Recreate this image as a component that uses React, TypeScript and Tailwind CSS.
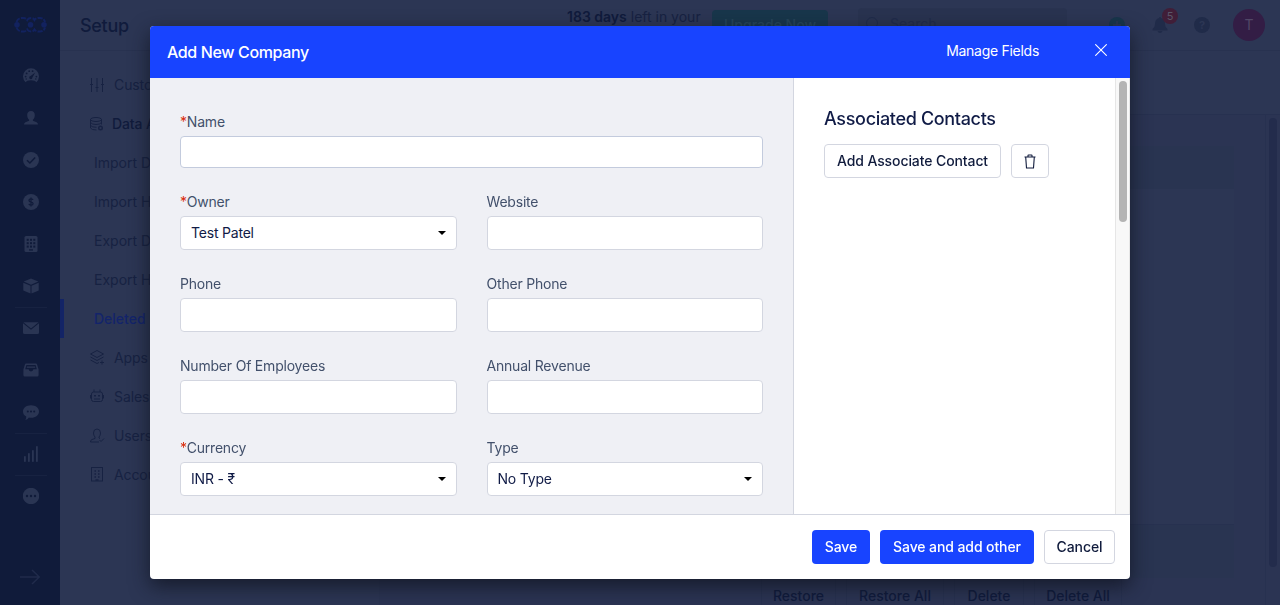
import React from "react";

type Kids = { children: React.ReactNode };

function Solid({ children }: Kids) {
  return (
    <svg viewBox="0 0 16 16" className="h-4 w-4 fill-[#2a3553]">
      {children}
    </svg>
  );
}

function Line({ children }: Kids) {
  return (
    <svg
      viewBox="0 0 14 14"
      className="h-3.5 w-3.5 shrink-0 overflow-visible fill-none stroke-[#172242]"
      strokeWidth="1"
    >
      {children}
    </svg>
  );
}

const dark = "#101b3a";

const navIcons: { divider?: boolean; icon: React.ReactNode }[] = [
  {
    icon: (
      <Solid>
        <path d="M2.6 14.2A8 8 0 1 1 13.4 14.2Q12.4 12.2 8 12.2Q3.6 12.2 2.6 14.2Z" />
        <g fill={dark}>
          <circle cx="2.6" cy="8.6" r=".9" />
          <circle cx="3.6" cy="5.4" r=".9" />
          <circle cx="6.2" cy="3.2" r=".9" />
          <circle cx="9.6" cy="3.2" r=".9" />
          <circle cx="13.4" cy="8.6" r=".9" />
          <circle cx="3.2" cy="11" r=".7" />
          <circle cx="12.8" cy="11" r=".7" />
          <path d="M12.2 4.4L9.4 9.6A1.6 1.6 0 1 1 7.6 8.1Z" />
        </g>
      </Solid>
    ),
  },
  {
    icon: (
      <Solid>
        <path d="M8 1C10.6 1 11.9 2.8 11.8 5.2C11.7 7.4 11 8.8 9.9 9.7V10.8L13.6 12.2Q15 12.8 15 14.6H1Q1 12.8 2.4 12.2L6.1 10.8V9.7C5 8.8 4.3 7.4 4.2 5.2C4.1 2.8 5.4 1 8 1Z" />
      </Solid>
    ),
  },
  {
    icon: (
      <Solid>
        <circle cx="8" cy="8" r="8" />
        <path d="M4 8.2L6.9 11L12.2 5.4" fill="none" stroke={dark} strokeWidth="1.5" />
      </Solid>
    ),
  },
  {
    icon: (
      <Solid>
        <circle cx="8" cy="8" r="8" />
        <path
          d="M10 6Q9.8 4.9 8 4.9Q6 4.9 6 6.4Q6 7.6 8 8Q10.1 8.4 10.1 9.7Q10.1 11.2 8 11.2Q6.1 11.2 5.9 9.9M8 3.5V12.5"
          fill="none"
          stroke={dark}
          strokeWidth="1.2"
        />
      </Solid>
    ),
  },
  {
    icon: (
      <Solid>
        <rect x="1.5" width="13" height="16" rx="1.5" />
        <g fill={dark}>
          {[2.8, 6.2, 9.6].map((y) =>
            [3.7, 7, 10.3].map((x) => <rect key={`${x}-${y}`} x={x} y={y} width="2" height="2" />),
          )}
          <rect x="6" y="13.3" width="4" height="1.3" />
        </g>
      </Solid>
    ),
  },
  {
    icon: (
      <Solid>
        <path d="M8 .5L15.3 3.6L8 6.7L.7 3.6Z" />
        <path d="M.3 4.7L7.5 7.7V15.4L.3 12.4Z" />
        <path d="M15.7 4.7L8.5 7.7V15.4L15.7 12.4Z" />
      </Solid>
    ),
  },
  {
    divider: true,
    icon: (
      <Solid>
        <path d="M.4 2.2H15.6L8 8.4Z" />
        <path d="M0 3.3L8 9.8L16 3.3V12.5Q16 14 14.5 14H1.5Q0 14 0 12.5Z" />
      </Solid>
    ),
  },
  {
    icon: (
      <Solid>
        <path
          fillRule="evenodd"
          d="M3 1.500H13Q13.800 1.500 14 2.300L15.600 7.500V13Q15.600 14.500 14.200 14.500H1.800Q.4 14.500 .4 13V7.500L2 2.300Q2.200 1.500 3 1.500ZM3.400 2.900L2.200 7.300H5.600Q5.800 9.400 8 9.400Q10.200 9.400 10.400 7.300H13.800L12.600 2.900Z"
        />
        <rect x="3.8" y="4.5" width="8.4" height="1.3" />
      </Solid>
    ),
  },
  {
    icon: (
      <Solid>
        <path d="M8 1.200C12.800 1.200 16 4 16 7.500S12.800 13.800 8 13.800Q6.800 13.800 5.900 13.600Q4.500 15.700 2.300 15.900Q3.500 14.300 3.200 12.600Q0 10.800 0 7.500C0 4 3.200 1.200 8 1.200Z" />
        <g fill={dark}>
          <circle cx="4.8" cy="7.5" r="1" />
          <circle cx="8" cy="7.5" r="1" />
          <circle cx="11.2" cy="7.5" r="1" />
        </g>
      </Solid>
    ),
  },
  {
    divider: true,
    icon: (
      <Solid>
        <rect x="1" y="10" width="1.8" height="6" rx=".8" />
        <rect x="5" y="7" width="1.8" height="9" rx=".8" />
        <rect x="9" y="4" width="1.8" height="12" rx=".8" />
        <rect x="13" y="0" width="1.8" height="16" rx=".8" />
      </Solid>
    ),
  },
  {
    divider: true,
    icon: (
      <Solid>
        <circle cx="8" cy="8" r="8.2" />
        <g fill={dark}>
          <circle cx="4" cy="8" r="1.2" />
          <circle cx="8" cy="8" r="1.2" />
          <circle cx="12" cy="8" r="1.2" />
        </g>
      </Solid>
    ),
  },
];

function Sidebar() {
  return (
    <aside className="flex w-[60px] shrink-0 flex-col bg-[#101b3a] pt-4">
      <div className="flex h-[39px] justify-center">
        <svg
          viewBox="0 0 33 17"
          className="h-[17px] w-[33px] fill-none stroke-[#12225f]"
          strokeWidth="2"
          strokeDasharray="5 1.2"
        >
          <path d="M2.500 6Q4 2 8 2H9.500Q12 2 13.200 4Q14.500 2 17 2Q19.500 2 20.500 4Q22 2 24.500 2H26Q30 2 31 6M2.500 11.500Q4 15.500 8 15.500H9.500Q12 15.500 13.200 13.500Q14.500 15.500 17 15.500Q19.500 15.500 20.500 13.500Q22 15.500 24.500 15.500H26Q30 15.500 31 11.500" />
          <g className="fill-[#12225f] stroke-none">
            <circle cx="3" cy="8.8" r="2.8" />
            <circle cx="16.5" cy="8.8" r="2.8" />
            <circle cx="30" cy="8.8" r="2.8" />
          </g>
        </svg>
      </div>
      {navIcons.map((n, i) => (
        <div key={i} className="flex h-[42px] flex-col items-center pl-0.5">
          <div className={n.divider ? "-mb-px h-px w-8 bg-[#172241]" : "-mb-px h-px w-8"} />
          <div className="flex flex-1 items-center">{n.icon}</div>
        </div>
      ))}
      <div className="mt-auto flex h-14 items-center justify-center">
        <svg viewBox="0 0 20 16" className="h-4 w-5 fill-none stroke-[#202b4b]" strokeWidth="1.5">
          <path d="M0 8H19M12 1L19.300 8L12 15" />
        </svg>
      </div>
    </aside>
  );
}

const menu: { text: string; icon?: React.ReactNode; kind?: "group" | "active" }[] = [
  {
    text: "Custom",
    icon: (
      <Line>
        <path d="M1.500 0V14M7 0V14M12.500 0V14M0 6.500H3M5.500 9.500H8.500M11 6.500H14" />
      </Line>
    ),
  },
  {
    text: "Data Ad",
    kind: "group",
    icon: (
      <Line>
        <ellipse cx="6" cy="2.5" rx="5.5" ry="2" />
        <path d="M.5 2.500V11Q1.500 13 6.500 13M11.500 2.500V7.500M.5 5.500Q2 7.500 6 7.500T11.500 5.500M.5 8.500Q2 10.300 6.500 10.300" />
        <circle cx="10.5" cy="11" r="1.8" strokeWidth="1.4" />
      </Line>
    ),
  },
  { text: "Import D" },
  { text: "Import Hi" },
  { text: "Export D" },
  { text: "Export Hi" },
  { text: "Deleted", kind: "active" },
  {
    text: "Apps",
    icon: (
      <Line>
        <path d="M7 -.5L13.500 3L7 6.500L.5 3ZM.5 6L7 9.500L13.500 6M.5 9L7 12.500L9 11.500M12 9.500V13.500M10 11.500H14" />
      </Line>
    ),
  },
  {
    text: "Sales",
    icon: (
      <Line>
        <rect x="1.5" y="2" width="11" height="9.5" rx="2" />
        <path d="M4 -.5V2M10 -.5V2M.5 5V8.500M13.500 5V8.500M4 9H10" />
        <path d="M4 5.800H6M8 5.800H10" strokeWidth="1.6" />
      </Line>
    ),
  },
  {
    text: "Users",
    icon: (
      <Line>
        <path d="M9 13H.5Q.5 11 2 10.500L5 9.500V8Q3.500 6.500 3.500 4Q3.500 0 7 0T10.500 4Q10.500 6.500 9 8V9L10 9.500M9.500 11L11 12.500L14 9.500" />
      </Line>
    ),
  },
  {
    text: "Accou",
    icon: (
      <Line>
        <rect x="1.5" y="-.5" width="11" height="13.5" />
        <path
          d="M4.500 3H6M8 3H9.500M4.500 6H6M8 6H9.500M4.500 9H6M8 9H9.500M5.500 12H8.500"
          strokeWidth="1.5"
        />
      </Line>
    ),
  },
];

function SetupMenu() {
  return (
    <nav className="w-80 shrink-0 border-r border-[#28325080] pt-[14px]">
      {menu.map((m) => (
        <div
          key={m.text}
          className={
            m.kind === "active"
              ? "flex h-[39px] items-center border-l-4 border-[#132466] pl-[30px] text-sm font-medium text-[#13246b]"
              : m.kind === "group"
                ? "flex h-[39px] items-center gap-2 pl-[30px] text-sm font-medium tracking-[-0.1px] text-[#101b3c]"
                : m.icon
                  ? "flex h-[39px] items-center gap-2.5 pl-[30px] text-sm tracking-[-0.1px] text-[#172242]"
                  : "flex h-[39px] items-center pl-[34px] text-sm text-[#172242]"
          }
        >
          {m.icon}
          {m.text}
        </div>
      ))}
    </nav>
  );
}

function TopBar() {
  return (
    <header className="flex h-[51px] shrink-0 items-start border-b border-[#283250] pl-5 pr-[15px]">
      <h1 className="w-[487px] pt-[13px] text-lg leading-[26px] font-medium tracking-[-0.3px] text-[#101b3c]">
        Setup
      </h1>
      <p className="w-[145px] pt-[7px] text-sm leading-5 text-[#172242]">
        <b className="font-semibold text-[#101b3c]">183 days</b> left in your
      </p>
      <button className="mt-2.5 h-[30px] w-[116px] rounded bg-[#18364b] text-sm font-medium text-[#26455a]">
        Upgrade Now
      </button>
      <div className="ml-[30px] mt-2 flex h-8 w-[209px] items-center gap-2.5 rounded bg-[#293350] pl-2 text-sm text-[#202b4b]">
        <svg viewBox="0 0 14 14" className="h-3.5 w-3.5 fill-none stroke-[#202b4b]">
          <circle cx="6" cy="6" r="5.5" />
          <path d="M10 10L14 14" />
        </svg>
        Search
      </div>
      <svg viewBox="0 0 16 16" className="ml-auto mt-[17px] h-4 w-4 fill-[#18364b]">
        <circle cx="8" cy="8" r="8" />
        <path d="M8 4V12M4 8H12" className="stroke-[#2c3654]" strokeWidth="1.5" />
      </svg>
      <div className="relative ml-[27px] mt-[17px] h-4 w-4">
        <svg viewBox="0 0 16 16" className="h-4 w-4 fill-[#202b49]">
          <path d="M8 0Q9 0 9 1Q13 2 13 7Q13 10.500 15.500 12V13.500H.5V12Q3 10.500 3 7Q3 2 7 1Q7 0 8 0ZM5.500 14H10.500Q10 16 8 16T5.500 14Z" />
        </svg>
        <span className="absolute -top-[9px] left-[10px] flex h-4 w-4 items-center justify-center rounded-full bg-[#401e38] text-[11px] text-[#5b5669]">
          5
        </span>
      </div>
      <div className="ml-[26px] mt-[17px] flex h-4 w-4 items-center justify-center rounded-full bg-[#202b49] text-[11px] font-bold text-[#2c3654]">
        ?
      </div>
      <div className="ml-[23px] mt-[9px] flex h-8 w-8 items-center justify-center rounded-full bg-[#331d45] text-sm text-[#514766]">
        T
      </div>
    </header>
  );
}

function Background() {
  return (
    <div className="flex h-[605px] overflow-hidden bg-[#2c3654] whitespace-nowrap">
      <Sidebar />
      <div className="flex min-w-0 flex-1 flex-col">
        <TopBar />
        <div className="flex min-h-0 flex-1">
          <SetupMenu />
          <div className="flex min-w-0 flex-1 flex-col pt-[63px]">
            <div className="flex min-h-0 flex-1 border-t border-[#273150] bg-[#2b3453]">
              <div className="flex flex-1 flex-col pl-[30px] pr-[31px] pt-[31px]">
                <div className="h-[43px] shrink-0 bg-[#293451]" />
                <div className="h-[335px] shrink-0 bg-[#2c3654]" />
                <div className="h-[54px] shrink-0 border-t border-[#273150] bg-[#293451]" />
                <div className="flex shrink-0 gap-2.5 pl-[351px] text-sm font-medium text-[#101b3c]">
                  <span className="w-[75px] border-x border-[#273150] text-center leading-9">Restore</span>
                  <span className="w-[98px] border-x border-[#273150] text-center leading-9">Restore All</span>
                  <span className="w-[70px] border-x border-[#273150] text-center leading-9">Delete</span>
                  <span className="w-[88px] border-x border-[#273150] text-center leading-9">Delete All</span>
                </div>
              </div>
              <div className="w-[15px] border-l border-[#273150] pl-[3px] pt-[3px]">
                <div className="h-[449px] w-2 rounded-full bg-[#232c4c]" />
              </div>
            </div>
          </div>
        </div>
      </div>
    </div>
  );
}

type FieldProps = { label: string; required?: boolean; value?: string; wide?: boolean };

function Field({ label, required, value, wide }: FieldProps) {
  return (
    <div className={wide ? "col-span-2" : ""}>
      <label className="mb-1 block text-sm leading-5 tracking-[-0.2px] text-[#42506b]">
        {required && <span className="text-[#d92b0b]">*</span>}
        {label}
      </label>
      <div
        className={
          wide
            ? "h-8 rounded border border-[#c3cbdd] bg-white"
            : "flex h-[34px] items-center justify-between rounded border border-[#d3d6e0] bg-white px-2.5 text-sm tracking-[-0.2px] text-[#101b46]"
        }
      >
        {value && (
          <>
            <span>{value}</span>
            <svg viewBox="0 0 8 4" className="h-1 w-2 fill-black">
              <path d="M0 0H8L4 4Z" />
            </svg>
          </>
        )}
      </div>
    </div>
  );
}

function CompanyDialog() {
  return (
    <div
      role="dialog"
      className="flex h-[553px] w-[980px] flex-col overflow-hidden rounded bg-white shadow-[0_7px_20px_0_rgba(16,20,32,0.8)]"
    >
      <div className="flex h-[52px] shrink-0 items-center bg-[#1844ff] pl-[17px] pr-[23px] text-white">
        <h2 className="text-base font-medium tracking-[-0.37px]">Add New Company</h2>
        <span className="-mt-0.5 ml-auto text-sm tracking-[-0.28px]">Manage Fields</span>
        <svg viewBox="0 0 12 12" className="-mt-1 ml-14 h-3 w-3 fill-none stroke-white" strokeWidth="1.1">
          <path d="M.3.3L11.700 11.700M11.700.3L.3 11.700" />
        </svg>
      </div>
      <div className="flex min-h-0 flex-1">
        <div className="grid w-[643px] shrink-0 grid-cols-2 content-start gap-x-[30px] gap-y-6 bg-[#eff0f5] px-[30px] pt-[34px]">
          <Field label="Name" required wide />
          <Field label="Owner" required value="Test Patel" />
          <Field label="Website" />
          <Field label="Phone" />
          <Field label="Other Phone" />
          <Field label="Number Of Employees" />
          <Field label="Annual Revenue" />
          <Field label="Currency" required value="INR - ₹" />
          <Field label="Type" value="No Type" />
        </div>
        <div className="flex-1 border-l border-[#d3d6e0] pl-[30px] pt-[27px]">
          <h3 className="text-lg leading-7 font-medium tracking-[-0.33px] text-[#101b46]">Associated Contacts</h3>
          <div className="mt-[11px] flex gap-2.5">
            <button className="h-[34px] w-[177px] rounded border border-[#d3d6e0] text-sm font-medium tracking-[-0.1px] text-[#101b3c]">
              Add Associate Contact
            </button>
            <button className="flex h-[34px] w-[38px] items-center justify-center rounded border border-[#d3d6e0]">
              <svg viewBox="0 0 12 15" className="mt-px h-[15px] w-3 fill-none stroke-[#101b3c]" strokeWidth="1.1">
                <path d="M.5 3H11.500M4 3V1.500Q4 1 4.500 1H7.500Q8 1 8 1.500V3M1.700 3L2.500 14H9.500L10.300 3" />
              </svg>
            </button>
          </div>
        </div>
        <div className="w-[15px] border-x border-[#e6e6e6] bg-[#f8f8f8] pl-[3px] pt-[3px]">
          <div className="h-[141px] w-2 rounded-full bg-[#b4b4b4]" />
        </div>
      </div>
      <div className="flex h-[65px] shrink-0 items-center justify-end gap-2.5 border-t border-[#d3d6e0] pr-[15px] text-sm font-medium tracking-[-0.1px]">
        <button className="h-[34px] w-[58px] rounded bg-[#1844ff] text-white">Save</button>
        <button className="h-[34px] w-[154px] rounded bg-[#1844ff] text-white">Save and add other</button>
        <button className="h-[34px] w-[71px] rounded border border-[#d3d6e0] text-[#101b3c]">Cancel</button>
      </div>
    </div>
  );
}

export default function App() {
  return (
    <div className="h-[605px] overflow-hidden font-['Inter','Noto_Sans',sans-serif]">
      <Background />
      <div className="fixed inset-0 flex items-start justify-center pt-[26px]">
        <CompanyDialog />
      </div>
    </div>
  );
}
